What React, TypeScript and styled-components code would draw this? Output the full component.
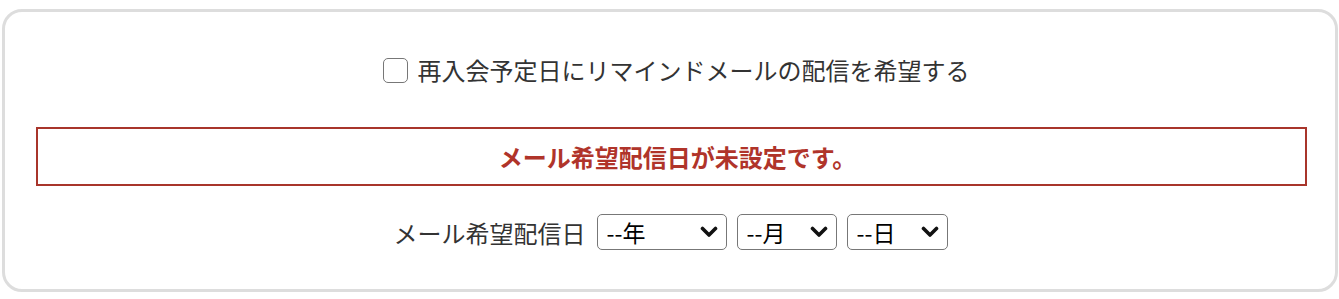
import styled, { createGlobalStyle } from "styled-components";

const GlobalStyle = createGlobalStyle`
  html, body {
    margin: 0;
    padding: 0;
    background: #ffffff;
  }
  body {
    font-family: "Noto Sans CJK JP", "Noto Sans", sans-serif;
    color: #333333;
  }
`;

const Page = styled.div`
  padding: 9px 1px 7px 2px;
`;

const Card = styled.section`
  border: 3px solid #dddddd;
  border-radius: 20px;
  padding: 40px 28px 39px 31px;
  display: flex;
  flex-direction: column;
  align-items: stretch;
`;

const CheckRow = styled.label`
  display: flex;
  align-items: center;
  justify-content: center;
  gap: 10px;
  height: 36px;
  font-size: 24px;
  line-height: 36px;
  color: #333333;
  padding-left: 9px;
`;

const CheckBox = styled.input.attrs({ type: "checkbox" })`
  appearance: none;
  margin: 0;
  width: 25px;
  height: 25px;
  border: 1.5px solid #777777;
  border-radius: 5px;
  background: #ffffff;
  box-sizing: border-box;
  flex: none;
`;

const ErrorBox = styled.div`
  margin-top: 39px;
  height: 59px;
  box-sizing: border-box;
  border: 2px solid #a8352b;
  display: flex;
  align-items: center;
  justify-content: center;
  font-size: 24px;
  font-weight: 700;
  color: #b0342a;
  padding-left: 12px;
`;

const DateRow = styled.div`
  margin-top: 28px;
  display: flex;
  align-items: center;
  justify-content: center;
  gap: 10px;
  font-size: 24px;
  color: #333333;
  padding-right: 2px;
`;

const DateLabel = styled.span`
  margin-right: 1px;
`;

const SelectWrap = styled.div<{ $width: number }>`
  position: relative;
  width: ${(p) => p.$width}px;
  height: 36px;
`;

const Select = styled.select`
  appearance: none;
  width: 100%;
  height: 100%;
  box-sizing: border-box;
  border: 1.5px solid #777777;
  border-radius: 5px;
  background: #ffffff;
  font-family: "Noto Sans CJK JP", "Noto Sans", sans-serif;
  font-size: 23px;
  color: #000000;
  padding: 0 0 0 9px;
  margin: 0;
`;

const Chevron = styled.svg`
  position: absolute;
  right: 9px;
  top: 50%;
  width: 18px;
  height: 12px;
  transform: translateY(-50%);
  pointer-events: none;
`;

function DateSelect({ label, width }: { label: string; width: number }) {
  return (
    <SelectWrap $width={width}>
      <Select defaultValue="">
        <option value="">{label}</option>
      </Select>
      <Chevron viewBox="0 0 18 12">
        <path
          d="M2.5 2.5 L9 9 L15.5 2.5"
          fill="none"
          stroke="#111111"
          strokeWidth="3.6"
          strokeLinecap="round"
          strokeLinejoin="round"
        />
      </Chevron>
    </SelectWrap>
  );
}

export default function App() {
  return (
    <>
      <GlobalStyle />
      <Page>
        <Card>
          <CheckRow>
            <CheckBox />
            再入会予定日にリマインドメールの配信を希望する
          </CheckRow>
          <ErrorBox>メール希望配信日が未設定です。</ErrorBox>
          <DateRow>
            <DateLabel>メール希望配信日</DateLabel>
            <DateSelect label="--年" width={130} />
            <DateSelect label="--月" width={100} />
            <DateSelect label="--日" width={101} />
          </DateRow>
        </Card>
      </Page>
    </>
  );
}
